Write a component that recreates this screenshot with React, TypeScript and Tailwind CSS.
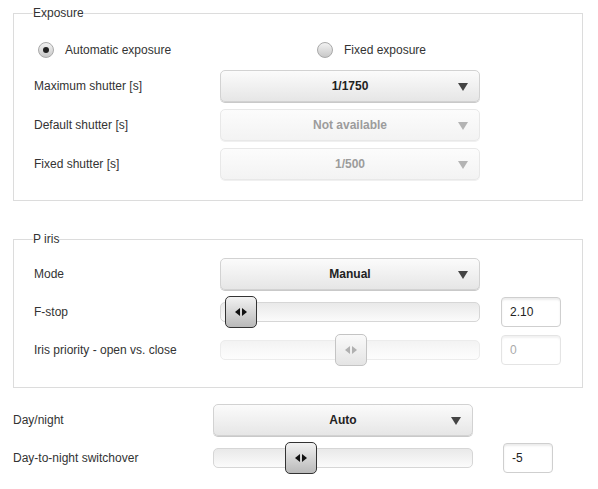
import React from 'react';

const font = { fontFamily: '"Liberation Sans", Arial, sans-serif' };

const Arrow: React.FC<{ disabled?: boolean }> = ({ disabled }) => (
  <svg width="10" height="8" viewBox="0 0 10 8" className="absolute right-[11px] top-[12px]">
    <polygon points="0,0 10,0 5,8" fill={disabled ? '#b4b4b4' : '#444'} />
  </svg>
);

const Select: React.FC<{ value: string; disabled?: boolean }> = ({ value, disabled }) => (
  <div
    className={
      'relative flex h-[32px] w-[260px] items-center justify-center rounded-[5px] border text-[12px] font-bold ' +
      (disabled
        ? 'border-[#e8e8e8] bg-[linear-gradient(#fcfcfc,#f3f3f3)] text-[#9c9c9c] shadow-[0_1px_0_#f0f0f0]'
        : 'border-[#d2d2d2] bg-[linear-gradient(#fbfbfb,#e6e6e6)] text-[#222] shadow-[0_1px_0_#c9c9c9]')
    }
  >
    {value}
    <Arrow disabled={disabled} />
  </div>
);

const Slider: React.FC<{ pos: number; disabled?: boolean }> = ({ pos, disabled }) => (
  <div className="relative h-[32px] w-[260px]">
    <div
      className={
        'absolute inset-x-0 top-[6px] h-[20px] rounded-[5px] border ' +
        (disabled
          ? 'border-[#ececec] bg-[linear-gradient(#f3f3f3,#fdfdfd)]'
          : 'border-[#d6d6d6] bg-[linear-gradient(#e9e9e9,#fbfbfb)]')
      }
    />
    <div
      className={
        'absolute top-0 flex h-[32px] w-[32px] items-center justify-center rounded-[5px] border ' +
        (disabled
          ? 'border-[#c4c4c4] bg-[linear-gradient(#fafafa,#e4e4e4)]'
          : 'border-[#333] bg-[linear-gradient(#f2f2f2,#b9b9b9)]')
      }
      style={{ left: pos }}
    >
      <svg width="12" height="8" viewBox="0 0 12 8">
        <polygon points="5,0 5,8 0,4" fill={disabled ? '#b0b0b0' : '#111'} />
        <polygon points="7,0 7,8 12,4" fill={disabled ? '#b0b0b0' : '#111'} />
      </svg>
    </div>
  </div>
);

const NumInput: React.FC<{ value: string; disabled?: boolean; w: string }> = ({ value, disabled, w }) => (
  <div
    className={
      'flex h-[30px] items-center rounded-[4px] border pl-[8px] text-[12px] ' +
      w +
      (disabled
        ? ' border-[#e4e4e4] text-[#aaa] shadow-[inset_0_2px_2px_#f2f2f2]'
        : ' border-[#cfcfcf] text-[#222] shadow-[inset_0_2px_2px_#ececec]')
    }
  >
    {value}
  </div>
);

const Radio: React.FC<{ checked?: boolean; label: string; className?: string }> = ({ checked, label, className }) => (
  <div className={'flex items-center gap-[11px] ' + (className ?? '')}>
    <div className="flex h-[16px] w-[16px] items-center justify-center rounded-full border border-[#a9a9a9] bg-[linear-gradient(#f2f2f2,#c8c8c8)]">
      {checked && <div className="h-[6px] w-[6px] rounded-full bg-[#222]" />}
    </div>
    <span>{label}</span>
  </div>
);

const Row: React.FC<{ label: string; labelW: string; children: React.ReactNode }> = ({ label, labelW, children }) => (
  <div className="flex items-center">
    <div className={'shrink-0 ' + labelW}>{label}</div>
    {children}
  </div>
);

export default function App() {
  return (
    <div className="h-[489px] w-[598px] bg-white px-[13px] pt-[6px] text-[12px] text-[#333]" style={font}>
      <fieldset className="w-[570px] rounded-none border border-[#dcdcdc] px-[20px] pb-[20px] pt-[20px]">
        <legend className="px-0 leading-[14px] -ml-px">Exposure</legend>
        <div className="flex h-[20px] items-center pl-[4px]">
          <Radio checked label="Automatic exposure" className="w-[279px]" />
          <Radio label="Fixed exposure" />
        </div>
        <div className="mt-[10px] flex flex-col gap-[7px]">
          <Row label="Maximum shutter [s]" labelW="w-[186px]">
            <Select value="1/1750" />
          </Row>
          <Row label="Default shutter [s]" labelW="w-[186px]">
            <Select value="Not available" disabled />
          </Row>
          <Row label="Fixed shutter [s]" labelW="w-[186px]">
            <Select value="1/500" disabled />
          </Row>
        </div>
      </fieldset>

      <fieldset className="mt-[31px] w-[570px] rounded-none border border-[#dcdcdc] px-[20px] pb-[21px] pt-[12px]">
        <legend className="px-0 leading-[14px] -ml-px">P iris</legend>
        <div className="flex flex-col gap-[6px]">
          <Row label="Mode" labelW="w-[186px]">
            <Select value="Manual" />
          </Row>
          <Row label="F-stop" labelW="w-[186px]">
            <Slider pos={5} />
            <div className="ml-[21px]">
              <NumInput value="2.10" w="w-[60px]" />
            </div>
          </Row>
          <Row label="Iris priority - open vs. close" labelW="w-[186px]">
            <Slider pos={115} disabled />
            <div className="ml-[21px]">
              <NumInput value="0" disabled w="w-[60px]" />
            </div>
          </Row>
        </div>
      </fieldset>

      <div className="mt-[16px] flex flex-col gap-[6px]">
        <Row label="Day/night" labelW="w-[200px]">
          <Select value="Auto" />
        </Row>
        <Row label="Day-to-night switchover" labelW="w-[200px]">
          <Slider pos={72} />
          <div className="ml-[30px]">
            <NumInput value="-5" w="w-[50px]" />
          </div>
        </Row>
      </div>
    </div>
  );
}
